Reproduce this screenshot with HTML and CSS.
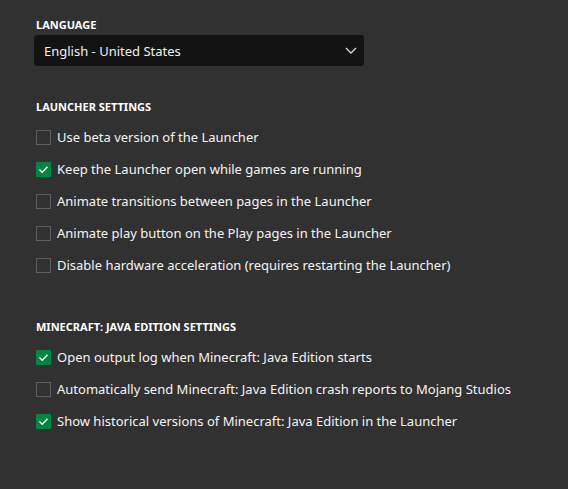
FILE: index.html
```html
<!DOCTYPE html>
<html lang="en">
<head>
<meta charset="utf-8">
<title>Settings</title>
<link rel="stylesheet" href="styles.css">
</head>
<body>
<main class="page">
  <section class="group group-language">
    <h2 class="heading">Language</h2>
    <div class="select">
      <span class="select-value">English - United States</span>
      <svg class="chevron" width="12" height="7" viewBox="0 0 12 7"><path d="M1 1 L6 6 L11 1" fill="none" stroke="#d8d8d8" stroke-width="1.3"/></svg>
    </div>
  </section>

  <section class="group group-launcher">
    <h2 class="heading">Launcher Settings</h2>
    <ul class="options">
      <li class="option"><span class="box"></span><span class="label">Use beta version of the Launcher</span></li>
      <li class="option"><span class="box checked"><svg width="15" height="15" viewBox="0 0 15 15"><path d="M3.5 7.5 L6.2 10.2 L11.5 4.8" fill="none" stroke="#fff" stroke-width="1.4"/></svg></span><span class="label">Keep the Launcher open while games are running</span></li>
      <li class="option"><span class="box"></span><span class="label">Animate transitions between pages in the Launcher</span></li>
      <li class="option"><span class="box"></span><span class="label">Animate play button on the Play pages in the Launcher</span></li>
      <li class="option"><span class="box"></span><span class="label">Disable hardware acceleration (requires restarting the Launcher)</span></li>
    </ul>
  </section>

  <section class="group group-java">
    <h2 class="heading">Minecraft: Java Edition Settings</h2>
    <ul class="options">
      <li class="option"><span class="box checked"><svg width="15" height="15" viewBox="0 0 15 15"><path d="M3.5 7.5 L6.2 10.2 L11.5 4.8" fill="none" stroke="#fff" stroke-width="1.4"/></svg></span><span class="label">Open output log when Minecraft: Java Edition starts</span></li>
      <li class="option"><span class="box"></span><span class="label">Automatically send Minecraft: Java Edition crash reports to Mojang Studios</span></li>
      <li class="option"><span class="box checked"><svg width="15" height="15" viewBox="0 0 15 15"><path d="M3.5 7.5 L6.2 10.2 L11.5 4.8" fill="none" stroke="#fff" stroke-width="1.4"/></svg></span><span class="label">Show historical versions of Minecraft: Java Edition in the Launcher</span></li>
    </ul>
  </section>
</main>
</body>
</html>
```
FILE: styles.css
```css
html, body {
  margin: 0;
  padding: 0;
  background: #313131;
  height: 100%;
}
body {
  font-family: "Noto Sans", "Open Sans", sans-serif;
  color: #ffffff;
}
.page {
  padding: 18px 0 0 34px;
  display: flex;
  flex-direction: column;
}
.group-language {
  margin-bottom: 34px;
}
.group-launcher {
  margin-bottom: 39px;
}
.heading {
  margin: 0 0 3px 2px;
  font-size: 11px;
  font-weight: 700;
  text-transform: uppercase;
  line-height: 14px;
  letter-spacing: 0;
}
.select {
  width: 330px;
  height: 31px;
  box-sizing: border-box;
  background: #131313;
  border-radius: 3px;
  display: flex;
  align-items: center;
  justify-content: space-between;
  padding: 0 7px 0 10px;
}
.select-value {
  font-size: 13px;
  color: #f0f0f0;
}
.chevron {
  display: block;
}
.options {
  list-style: none;
  margin: 7px 0 0 2px;
  padding: 0;
  display: flex;
  flex-direction: column;
}
.group-java .options {
  margin-top: 7px;
}
.option {
  height: 32px;
  display: flex;
  align-items: center;
  gap: 6px;
}
.box {
  width: 15px;
  height: 15px;
  box-sizing: border-box;
  border: 1px solid #5e5e5e;
  flex: none;
  position: relative;
}
.box.checked {
  background: #008542;
  border-color: #008542;
}
.box svg {
  position: absolute;
  left: -1px;
  top: -1px;
}
.label {
  font-size: 13px;
  color: #f4f4f4;
}
```
